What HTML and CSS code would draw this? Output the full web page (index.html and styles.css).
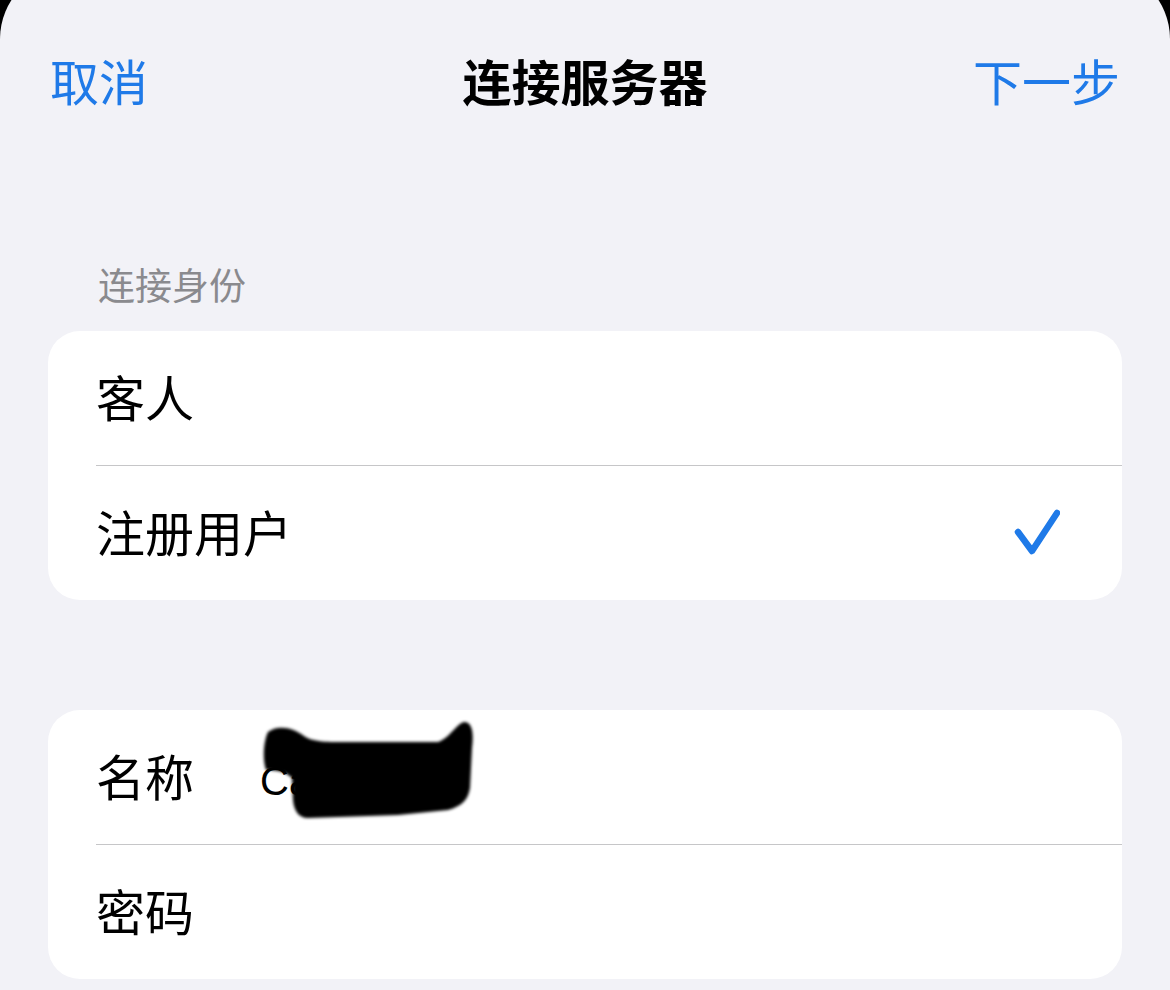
FILE: index.html
```html
<!DOCTYPE html>
<html lang="zh-CN">
<head>
  <meta charset="UTF-8">
  <meta name="viewport" content="width=device-width, initial-scale=1.0">
  <title>连接服务器</title>
  <link rel="stylesheet" href="styles.css">
</head>
<body>
  <div class="sheet">
    <div class="nav">
      <a href="#" class="nav-btn cancel">取消</a>
      <h1 class="nav-title">连接服务器</h1>
      <a href="#" class="nav-btn next">下一步</a>
    </div>

    <div class="section-title">连接身份</div>
    <div class="card">
      <div class="row">
        <span class="row-label">客人</span>
      </div>
      <div class="row">
        <span class="row-label">注册用户</span>
        <svg class="check" viewBox="0 0 48 48" width="48" height="48">
          <path d="M6 23 L20 42 L45 4" fill="none" stroke="#1f7ae8" stroke-width="6.5" stroke-linecap="round" stroke-linejoin="round"/>
        </svg>
      </div>
    </div>

    <div class="card card-login">
      <div class="row">
        <span class="row-label field-label">名称</span>
        <span class="field-value">Ca</span>
        <!-- 涂抹遮挡 -->
        <svg class="redact" viewBox="0 0 218 104" width="218" height="104">
          <path d="M10 14 C20 6 36 10 46 18 C52 22 60 24 80 24 L180 24 C192 20 198 6 206 4 C214 4 216 14 214 30 L212 70 C210 82 204 88 190 92 L140 97 L50 100 C40 100 36 92 35 82 L34 60 C28 54 20 52 8 52 C4 40 6 22 10 14 Z" fill="#000"/>
        </svg>
      </div>
      <div class="row">
        <span class="row-label field-label">密码</span>
      </div>
    </div>
  </div>
</body>
</html>
```

FILE: styles.css
```css
body {
  margin: 0;
  background: #000;
  font-family: "Noto Sans CJK SC", "Noto Sans", sans-serif;
  overflow: hidden;
}

.sheet {
  box-sizing: border-box;
  background: #f2f2f7;
  margin-top: -33px;
  padding-top: 64px;
  height: 1023px;
  border-radius: 72px 72px 0 0;
}

.nav {
  display: grid;
  grid-template-columns: 1fr auto 1fr;
  align-items: center;
  height: 96px;
  padding: 0 50px 0 50px;
}

.nav-btn {
  color: #1f7ae8;
  font-size: 49px;
  text-decoration: none;
}

.nav-btn.next {
  justify-self: end;
}

.nav-title {
  margin: 0;
  font-size: 49px;
  font-weight: 700;
  color: #000;
}

.section-title {
  margin: 134px 0 24px 98px;
  font-size: 37px;
  line-height: 46px;
  color: #8a8a8e;
}

.card {
  background: #fff;
  margin: 0 48px;
  border-radius: 32px;
  overflow: hidden;
}

.card-login {
  margin-top: 110px;
}

.row {
  position: relative;
  display: flex;
  align-items: center;
  height: 134px;
  margin-left: 48px;
  padding-right: 62px;
}

.row + .row {
  border-top: 1px solid #c6c6c8;
}

.row-label {
  font-size: 49px;
  color: #000;
  flex: 1;
  padding-bottom: 6px;
}

.field-label {
  flex: 0 0 164px;
}

.field-value {
  font-family: "Liberation Sans", sans-serif;
  font-size: 40px;
  color: #000;
  padding-top: 8px;
}

.check {
  display: block;
}

.redact {
  position: absolute;
  left: 162px;
  top: 8px;
  filter: blur(1.5px);
}
```
